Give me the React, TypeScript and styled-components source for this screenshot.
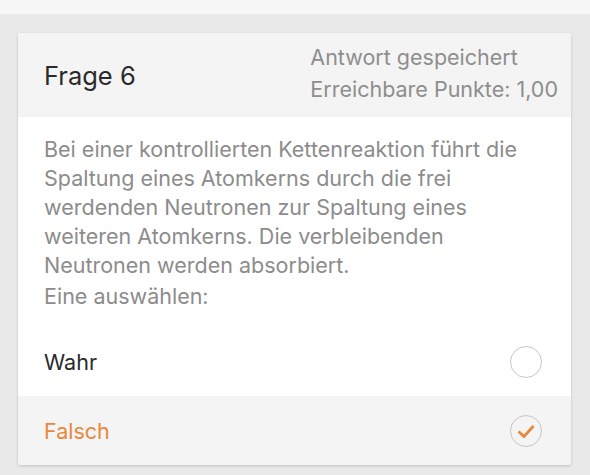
import React from "react";
import styled, { createGlobalStyle } from "styled-components";

const Global = createGlobalStyle`
  html, body { margin: 0; padding: 0; }
  body {
    background: #e9e9e9;
    font-family: Inter, Roboto, "Noto Sans", sans-serif;
    -webkit-font-smoothing: antialiased;
  }
`;

const Page = styled.div`
  width: 590px;
  height: 475px;
  background: #e9e9e9;
  display: flex;
  flex-direction: column;
  overflow: hidden;
`;

const TopStrip = styled.div`
  height: 14px;
  background: #f6f6f6;
  flex: none;
`;

const Content = styled.div`
  padding: 19px 19px 0 18px;
`;

const Card = styled.div`
  background: #fff;
  border-radius: 3px;
  box-shadow: 0 1px 3px rgba(0, 0, 0, 0.18);
  overflow: hidden;
`;

const Header = styled.div`
  height: 84px;
  background: #f4f4f4;
  display: flex;
  align-items: center;
  justify-content: space-between;
  padding: 0 13px 0 26px;
`;

const Title = styled.div`
  font-size: 25.5px;
  color: #2a2a2a;
`;

const Meta = styled.div`
  display: flex;
  flex-direction: column;
  align-items: flex-start;
  font-size: 21.5px;
  line-height: 32px;
  color: #8e8e8e;
  margin-top: -4px;
`;

const Body = styled.div`
  padding: 18px 40px 16px 26px;
  font-size: 21.5px;
  line-height: 29px;
  color: #8c8c8c;
`;

const Prompt = styled.div`
  margin-top: 2px;
`;

const Option = styled.div<{ $selected?: boolean }>`
  height: 69px;
  display: flex;
  align-items: center;
  justify-content: space-between;
  padding: 0 29px 0 26px;
  background: ${(p) => (p.$selected ? "#f4f4f4" : "#fff")};
  color: ${(p) => (p.$selected ? "#e8883a" : "#2a2a2a")};
  font-size: 21.5px;
`;

const Radio = styled.div`
  width: 32px;
  height: 32px;
  border-radius: 50%;
  border: 1.5px solid #c6c6c6;
  display: flex;
  align-items: center;
  justify-content: center;
  box-sizing: border-box;
`;

export default function App() {
  return (
    <Page>
      <Global />
      <TopStrip />
      <Content>
        <Card>
          <Header>
            <Title>Frage 6</Title>
            <Meta>
              <span>Antwort gespeichert</span>
              <span>Erreichbare Punkte: 1,00</span>
            </Meta>
          </Header>
          <Body>
            Bei einer kontrollierten Kettenreaktion führt die Spaltung eines
            Atomkerns durch die frei werdenden Neutronen zur Spaltung eines
            weiteren Atomkerns. Die verbleibenden Neutronen werden absorbiert.
            <Prompt>Eine auswählen:</Prompt>
          </Body>
          <Option>
            <span>Wahr</span>
            <Radio />
          </Option>
          <Option $selected>
            <span>Falsch</span>
            <Radio>
              <svg width="20" height="16" viewBox="0 0 20 16">
                <path
                  d="M2.5 8.5 L8 13.5 L17.5 3"
                  fill="none"
                  stroke="#e8883a"
                  strokeWidth="2.8"
                  strokeLinecap="butt"
                  strokeLinejoin="miter"
                />
              </svg>
            </Radio>
          </Option>
        </Card>
      </Content>
    </Page>
  );
}
